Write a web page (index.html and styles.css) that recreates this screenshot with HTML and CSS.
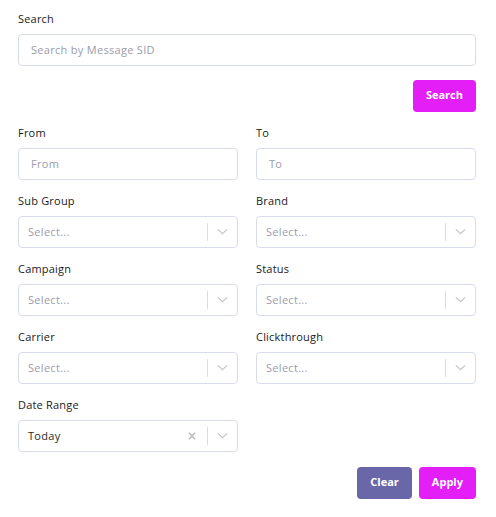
FILE: index.html
```html
<!DOCTYPE html>
<html>
<head>
<meta charset="utf-8">
<link rel="stylesheet" href="styles.css">
</head>
<body>
<div class="panel">
  <div class="field">
    <label class="label">Search</label>
    <div class="input placeholder pad-l">Search by Message SID</div>
  </div>
  <div class="actions top">
    <button class="btn primary">Search</button>
  </div>
  <div class="grid">
    <div class="field">
      <label class="label">From</label>
      <div class="input placeholder pad-l">From</div>
    </div>
    <div class="field">
      <label class="label">To</label>
      <div class="input placeholder pad-l">To</div>
    </div>
    <div class="field">
      <label class="label">Sub Group</label>
      <div class="input select"><span class="value placeholder">Select...</span><span class="sep"></span><svg class="chev" viewBox="0 0 20 20"><path d="M4.5 7.5 L10 12.5 L15.5 7.5"/></svg></div>
    </div>
    <div class="field">
      <label class="label">Brand</label>
      <div class="input select"><span class="value placeholder">Select...</span><span class="sep"></span><svg class="chev" viewBox="0 0 20 20"><path d="M4.5 7.5 L10 12.5 L15.5 7.5"/></svg></div>
    </div>
    <div class="field">
      <label class="label">Campaign</label>
      <div class="input select"><span class="value placeholder">Select...</span><span class="sep"></span><svg class="chev" viewBox="0 0 20 20"><path d="M4.5 7.5 L10 12.5 L15.5 7.5"/></svg></div>
    </div>
    <div class="field">
      <label class="label">Status</label>
      <div class="input select"><span class="value placeholder">Select...</span><span class="sep"></span><svg class="chev" viewBox="0 0 20 20"><path d="M4.5 7.5 L10 12.5 L15.5 7.5"/></svg></div>
    </div>
    <div class="field">
      <label class="label">Carrier</label>
      <div class="input select"><span class="value placeholder">Select...</span><span class="sep"></span><svg class="chev" viewBox="0 0 20 20"><path d="M4.5 7.5 L10 12.5 L15.5 7.5"/></svg></div>
    </div>
    <div class="field">
      <label class="label">Clickthrough</label>
      <div class="input select"><span class="value placeholder">Select...</span><span class="sep"></span><svg class="chev" viewBox="0 0 20 20"><path d="M4.5 7.5 L10 12.5 L15.5 7.5"/></svg></div>
    </div>
    <div class="field">
      <label class="label">Date Range</label>
      <div class="input select"><span class="value">Today</span><svg class="clear" viewBox="0 0 20 20"><path d="M5.5 5.5 L14.5 14.5 M14.5 5.5 L5.5 14.5"/></svg><span class="sep"></span><svg class="chev" viewBox="0 0 20 20"><path d="M4.5 7.5 L10 12.5 L15.5 7.5"/></svg></div>
    </div>
  </div>
  <div class="actions bottom">
    <button class="btn secondary">Clear</button>
    <button class="btn primary">Apply</button>
  </div>
</div>
</body>
</html>
```
FILE: styles.css
```css
* { box-sizing: border-box; }
html, body { margin: 0; background: #ffffff; }
body {
  font-family: "Open Sans", "Noto Sans", sans-serif;
  color: #222222;
}
.panel {
  width: 496px;
  padding: 11px 20px 0 18px;
  display: flex;
  flex-direction: column;
}
.field {
  display: flex;
  flex-direction: column;
}
.label {
  font-size: 11px;
  font-weight: 500;
  line-height: 16px;
  height: 16px;
  margin-bottom: 7px;
  color: #1a1a1a;
  letter-spacing: 0.2px;
}
.input {
  height: 32px;
  border: 1px solid #d9dcee;
  border-radius: 4px;
  font-size: 11px;
  line-height: 14px;
  letter-spacing: 0.3px;
  display: flex;
  align-items: center;
  padding-bottom: 1px;
  background: #fff;
}
.pad-l { padding-left: 12px; }
.placeholder { color: #9c9cab; }
.select { padding-left: 9px; padding-right: 6px; }
.select .value { flex: 1; }
.select .value:not(.placeholder) { color: #2a2a2a; }
.sep {
  width: 1px;
  height: 18px;
  background: #dcdce3;
  margin: 0 6px;
}
.chev {
  width: 17px;
  height: 17px;
  fill: none;
  stroke: #c4c4cc;
  stroke-width: 1.4;
}
.clear {
  width: 14px;
  height: 14px;
  fill: none;
  stroke: #b8b8c0;
  stroke-width: 2;
  margin-right: 2px;
}
.actions {
  display: flex;
  justify-content: flex-end;
  gap: 7px;
}
.actions.top { margin-top: 14px; margin-bottom: 13px; }
.actions.bottom { margin-top: 15px; }
.grid {
  display: grid;
  grid-template-columns: 220px 220px;
  column-gap: 18px;
  row-gap: 13px;
}
.btn {
  height: 32px;
  border: none;
  border-radius: 4px;
  color: #fff;
  font-family: inherit;
  font-size: 11px;
  font-weight: 700;
  line-height: 14px;
  padding: 0 13px 3px;
  cursor: pointer;
}
.btn.primary { background: #e41ef6; }
.btn.secondary { background: #6a67a8; }
```
